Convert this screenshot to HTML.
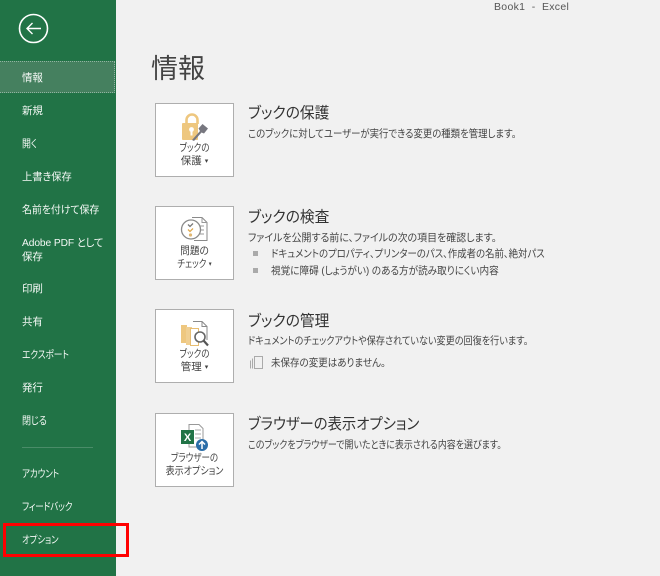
<!DOCTYPE html>
<html lang="ja">
<head>
<meta charset="utf-8">
<style>
html,body{margin:0;padding:0}
body{width:660px;height:576px;overflow:hidden;position:relative;background:#f1f1f1;font-family:"Liberation Sans","Noto Sans CJK JP",sans-serif;color:#444;font-feature-settings:"palt"}
.abs{position:absolute;white-space:nowrap}
#side{position:absolute;left:0;top:0;width:116px;height:576px;background:#217346}
.n{position:absolute;left:22px;color:#f4f8f5;font-size:10.5px;line-height:14px;white-space:nowrap;letter-spacing:-.1px;transform-origin:0 50%}
#sel{position:absolute;left:0;top:61px;width:115px;height:32px;background:#45805f;border-top:1px dotted #8fb5a0;border-bottom:1px dotted #8fb5a0;border-right:1px dotted #8fb5a0;box-sizing:border-box}
.btn{position:absolute;left:155px;width:79px;height:74px;background:#fff;border:1px solid #aeaeae;box-sizing:border-box}
.bl{position:absolute;left:0;width:77px;text-align:center;font-size:10.5px;line-height:14px;color:#444;white-space:nowrap}
.h{position:absolute;left:248px;font-size:15.5px;line-height:20px;color:#333;white-space:nowrap;transform-origin:0 50%}
.d{position:absolute;left:248px;font-size:10.5px;line-height:14px;color:#444;white-space:nowrap;transform-origin:0 50%}
.li{position:absolute;left:271px;font-size:10.5px;line-height:14px;color:#444;white-space:nowrap;transform-origin:0 50%}
.sq{position:absolute;left:253px;width:5px;height:5px;background:#aaa}
svg{position:absolute}
</style>
</head>
<body>
<div id="side"></div>
<svg style="left:18px;top:13px" width="32" height="32" viewBox="0 0 32 32" fill="none" stroke="#fff">
<circle cx="15.5" cy="15.5" r="14" stroke-width="1.6"/>
<path d="M9 15.500H23M14.500 10L9 15.500L14.500 21" stroke-width="1.4"/>
</svg>
<div id="sel"></div>
<div class="n" style="top:71px">情報</div>
<div class="n" style="top:104px">新規</div>
<div class="n" style="top:137px;transform:scaleX(.85)">開く</div>
<div class="n" style="top:170px;transform:scaleX(.98)">上書き保存</div>
<div class="n" style="top:203px;transform:scaleX(.95)">名前を付けて保存</div>
<div class="n" style="top:236px;transform:scaleX(.975)">Adobe PDF として</div>
<div class="n" style="top:250px">保存</div>
<div class="n" style="top:282px">印刷</div>
<div class="n" style="top:315px">共有</div>
<div class="n" style="top:348px;transform:scaleX(.83)">エクスポート</div>
<div class="n" style="top:381px">発行</div>
<div class="n" style="top:414px;transform:scaleX(.86)">閉じる</div>
<div class="abs" style="left:22px;top:447px;width:71px;height:1px;background:#4a8c68"></div>
<div class="n" style="top:467px;transform:scaleX(.81)">アカウント</div>
<div class="n" style="top:500px;transform:scaleX(.81)">フィードバック</div>
<div class="n" style="top:533px;transform:scaleX(.8)">オプション</div>
<div class="abs" style="left:3px;top:523px;width:120px;height:28px;border:3px solid #f00"></div>

<div class="abs" style="left:494px;top:0;font-size:10.5px;line-height:14px;color:#555;letter-spacing:.3px">Book1 &nbsp;-&nbsp; Excel</div>
<div class="abs" style="left:151px;top:52px;font-size:27px;line-height:34px;color:#444;font-feature-settings:normal">情報</div>

<div class="btn" style="top:103px">
<svg style="left:24px;top:8px" width="32" height="30" viewBox="0 0 32 30">
<path d="M6.500 12V8a5.500 5.500 0 0 1 11 0v4" fill="none" stroke="#eec77f" stroke-width="2.600"/>
<rect x="2" y="11" width="16" height="17" rx="1" fill="#eec77f"/>
<circle cx="11.500" cy="17.500" r="2.400" fill="#fff"/><rect x="10.500" y="17.500" width="2" height="6" fill="#fff"/>
<path d="M12 28L20 19L18.500 16.500L22.500 12L28 16.500L24 21.500L21.500 20.500L14 29Z" fill="#77777f"/>
</svg>
<div class="bl" style="top:37px;transform:scaleX(.81)">ブックの</div>
<div class="bl" style="top:50px">保護 <span style="font-size:7px;vertical-align:1px">▾</span></div>
</div>
<div class="h" style="top:104px;transform:scaleX(.95)">ブックの保護</div>
<div class="d" style="top:127px;transform:scaleX(.894)">このブックに対してユーザーが実行できる変更の種類を管理します。</div>

<div class="btn" style="top:206px">
<svg style="left:24px;top:9px" width="30" height="28" viewBox="0 0 30 28" fill="none">
<path d="M12 1.500H22L27 6.500V24.500H14" stroke="#8a8a8a" fill="#fff"/>
<path d="M22 1.500V6.500H27M19 10H24M19 14H24M19 18H24" stroke="#999"/>
<circle cx="11" cy="13.500" r="9.500" fill="#fff" stroke="#8a8a8a" stroke-width="1.300"/>
<path d="M8 8.500l2 2 3-3" stroke="#777" stroke-width="1.300"/>
<path d="M8 13.500l2 2 3-3" stroke="#e0a94e" stroke-width="1.300"/>
<circle cx="10.500" cy="19" r="1.600" fill="#e0b772"/>
</svg>
<div class="bl" style="top:37px;transform:scaleX(.92)">問題の</div>
<div class="bl" style="top:50px;transform:scaleX(.81)">チェック <span style="font-size:7px;vertical-align:1px">▾</span></div>
</div>
<div class="h" style="top:208px;transform:scaleX(.95)">ブックの検査</div>
<div class="d" style="top:231px;transform:scaleX(.947)">ファイルを公開する前に、ファイルの次の項目を確認します。</div>
<div class="sq" style="top:251px"></div>
<div class="li" style="top:247px;transform:scaleX(.895)">ドキュメントのプロパティ、プリンターのパス、作成者の名前、絶対パス</div>
<div class="sq" style="top:268px"></div>
<div class="li" style="top:264px;transform:scaleX(.916)">視覚に障碍 (しょうがい) のある方が読み取りにくい内容</div>

<div class="btn" style="top:309px">
<svg style="left:24px;top:10px" width="32" height="28" viewBox="0 0 32 28" fill="none">
<path d="M13 1.500H22L27 6.500V20" stroke="#8a8a8a" fill="#fff"/>
<path d="M22 1.500V6.500H27" stroke="#8a8a8a"/>
<rect x="1" y="5" width="6" height="18" fill="#eec77f"/>
<rect x="6" y="7" width="6" height="18" fill="#f0cf92"/>
<rect x="10.500" y="8.500" width="8" height="17" fill="#fff" stroke="#e7bd72"/>
<circle cx="20" cy="17" r="5" fill="#fff" stroke="#666" stroke-width="1.600"/>
<path d="M23.500 20.500L28 25.500" stroke="#555" stroke-width="2.200"/>
</svg>
<div class="bl" style="top:37px;transform:scaleX(.81)">ブックの</div>
<div class="bl" style="top:50px">管理 <span style="font-size:7px;vertical-align:1px">▾</span></div>
</div>
<div class="h" style="top:312px;transform:scaleX(.95)">ブックの管理</div>
<div class="d" style="top:334px;transform:scaleX(.868)">ドキュメントのチェックアウトや保存されていない変更の回復を行います。</div>
<svg style="left:250px;top:355px" width="14" height="15" viewBox="0 0 14 15" fill="none" stroke="#aaa">
<path d="M4.500 1.500H12.500V13.500H4.500Z"/><path d="M2.500 3.500V13.500M.5 5.500V13.500"/>
</svg>
<div class="li" style="top:356px;transform:scaleX(.906)">未保存の変更はありません。</div>

<div class="btn" style="top:413px">
<svg style="left:24px;top:9px" width="30" height="30" viewBox="0 0 30 30" fill="none">
<path d="M9 1.500H19L23 5.500V24H9Z" fill="#fff" stroke="#999"/>
<path d="M15 7H21M15 11H21M15 15H21" stroke="#aaa"/>
<rect x="1" y="7" width="13" height="14" fill="#217346"/>
<text x="7.500" y="18" font-family="Liberation Sans" font-size="11" font-weight="bold" fill="#fff" text-anchor="middle">X</text>
<circle cx="22" cy="22" r="6" fill="#2b6ea8"/>
<path d="M22 26V18.500M19 21.500L22 18.500L25 21.500" stroke="#fff" stroke-width="1.500"/>
</svg>
<div class="bl" style="top:37px;transform:scaleX(.81)">ブラウザーの</div>
<div class="bl" style="top:50px;transform:scaleX(.86)">表示オプション</div>
</div>
<div class="h" style="top:415px;transform:scaleX(.925)">ブラウザーの表示オプション</div>
<div class="d" style="top:438px;transform:scaleX(.854)">このブックをブラウザーで開いたときに表示される内容を選びます。</div>
</body>
</html>
